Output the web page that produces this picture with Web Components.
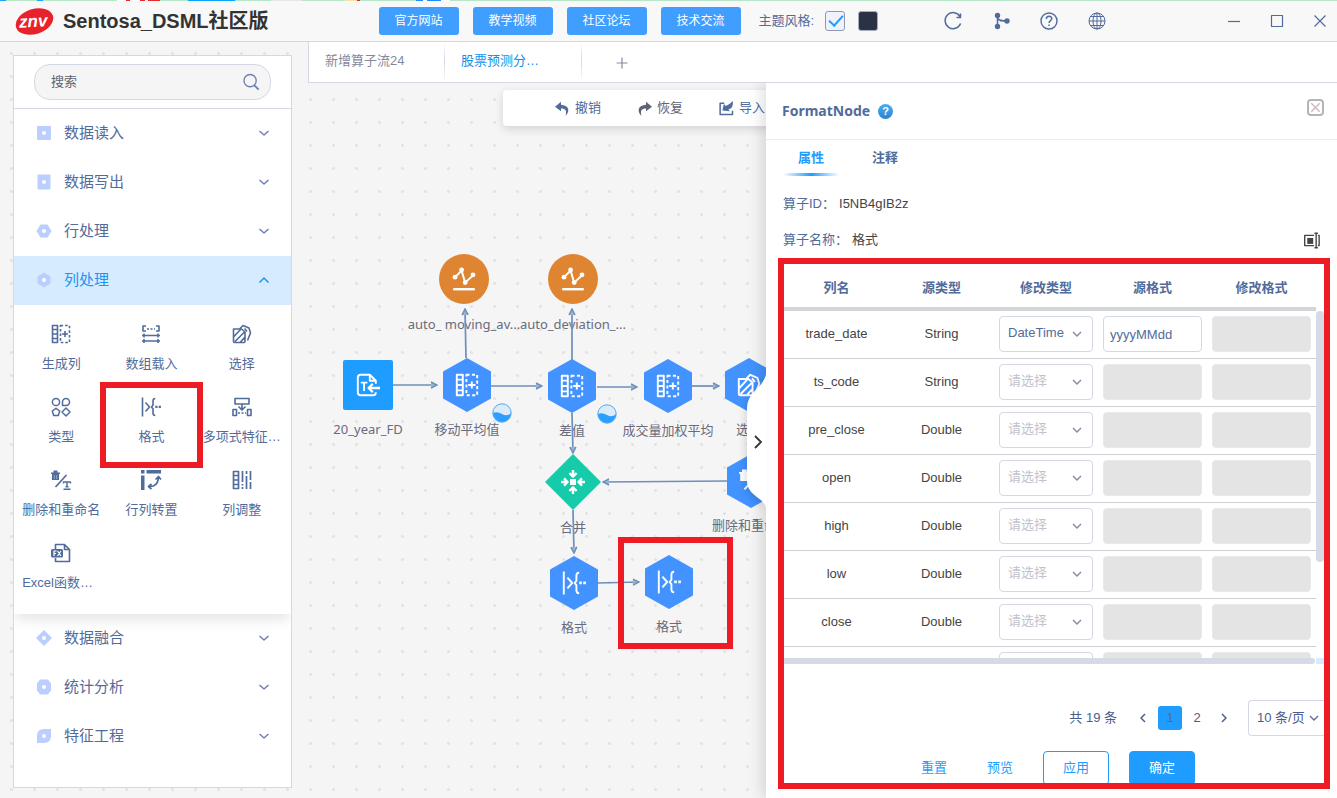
<!DOCTYPE html>
<html lang="zh-CN">
<head>
<meta charset="utf-8">
<meta name="viewport" content="width=device-width, initial-scale=1">
<title>Sentosa_DSML社区版</title>
<style>
  :root {
    --ink: #516b9b; --dark: #444; --muted: #85899c; --line: #d4d8e4; --blue: #1f9cff; --active: #1a96f5;
    --ui: "Liberation Sans", "Noto Sans CJK SC", sans-serif;
    --label: "Noto Sans", "Noto Sans CJK SC", sans-serif;
  }
  html, body { height: 100%; margin: 0; }
  body { font: 13px/18px var(--ui); color: var(--ink); background: #f5f5f5; overflow: hidden; }
</style>
</head>
<body>
<studio-app></studio-app>

<script>
const stroke = (w, d) => `<g fill="none" stroke="currentColor" stroke-width="${w}" stroke-linejoin="round">${d}</g>`;
const ICONS = {
  search: stroke(1.5, '<circle cx="9" cy="8.500" r="6.800"/><path d="M13.500 13.500l5 5" stroke-width="2"/>'),
  down: stroke(1.5, '<path d="M5.500 8l4.500 4 4.500-4"/>'),
  up: stroke(1.5, '<path d="M5.500 12.500l4.500-4.500 4.500 4.500"/>'),
  left: stroke(1.5, '<path d="M12 6l-4 4 4 4"/>'),
  right: stroke(1.5, '<path d="M8 6l4 4-4 4"/>'),
  plus: stroke(1.3, '<path d="M10 4v12M4 10h12"/>'),
  reload: stroke(1.5, '<path d="M17.600 12.500A8 8 0 1 1 17 5.500M17.500 2.500v4h-4"/>'),
  share: '<g fill="currentColor"><circle cx="6.500" cy="4.500" r="2.700"/><circle cx="6.500" cy="15.500" r="2.700"/><circle cx="16" cy="10" r="2.700"/></g>' + stroke(1.6, '<path d="M6.500 4.500v11M6.500 7c1 3 5 3 9.500 3"/>'),
  help: stroke(1.4, '<circle cx="10" cy="10" r="8"/><path d="M7.300 8c0-3.700 5.500-3.500 5.500-.4 0 2-2.800 2-2.800 4.300M10 13.500v1.600"/>'),
  globe: stroke(1, '<circle cx="10" cy="10" r="8"/><ellipse cx="10" cy="10" rx="4" ry="8"/><path d="M10 2v16M2 10h16M3.500 5.500h13M3.500 14.500h13"/>'),
  min: stroke(1.2, '<path d="M4 10.500h12"/>'),
  max: stroke(1.2, '<path d="M4.500 4.500h11v11h-11z"/>'),
  close: stroke(1.2, '<path d="M4.500 4.500l11 11M15.500 4.500l-11 11"/>'),
  cross: stroke(2.2, '<path d="M3.500 3.500l13 13M16.500 3.500l-13 13"/>'),
  undo: '<path fill="currentColor" d="M8 1L0 7.500 8 13.500V10c6 0 8 3 6 10C21 13 18 5.500 8 5z"/>',
  redo: '<path fill="currentColor" d="M12 1l8 6.500-8 6V10c-6 0-8 3-6 10C-1 13 2 5.500 12 5z"/>',
  import: stroke(2, '<path d="M7 3H1.500v15H18v-5"/>') + '<path fill="currentColor" d="M4.500 12.500l2-8.500 2.500 2.500Q14 5 18.500 0q1 10-6 11l2 2.500z"/>',
  rename: stroke(1.6, '<path d="M13 4H2v12h11M13.500 1.500h4M13.500 18.500h4M15.500 1.500v17M17.500 4H19v12h-1.500"/>') + '<path fill="currentColor" d="M5 7h7v7H5z"/>',
  gencol: stroke(1.6, '<path d="M1.500 1.500h5v17h-5zM1.500 5.500h5M1.500 10h5M1.500 14.500h5M14 7v6M11 10h6"/><path stroke-dasharray="2.600 2" d="M9.500 1.500h9v17h-9z"/>'),
  array: stroke(1.6, '<path d="M5 2H2v5h3M15 2h3v5h-3M1 11.500h18M1 17h18M3 9.500v4M17 9.500v4M3 15v4M17 15v4"/><path stroke-dasharray="2 1.500" d="M6 5h8"/>'),
  pick: stroke(1.6, '<path d="M1.500 5h8l3.500 3v9.500q0 1-1 1H2.500q-1 0-1-1zM2 12.500l6.500-7M3 17.500l9.500-9.500M8.500 18l4.500-5M8 4.500L11 1.500l6 2.500 1.500 5-3 7.500"/><path d="M12.500 4.500l2.500 3"/>'),
  types: stroke(1.5, '<circle cx="5" cy="5" r="3.600"/><path d="M11.500 8.500V5a3.500 3.500 0 1 1 3.500 3.500zM5 11.300l3.700 2.700-1.400 4.400H2.700L1.300 14zM15 11l4 4-4 4-4-4z"/>'),
  format: stroke(1.6, '<path d="M1.500 .5v19M4.500 5.500L8.500 10l-4 4.500M14.300 1.500Q12 1.500 12 4v4.200L10.500 10l1.500 1.800V16q0 2.500 2.300 2.500"/>') + '<path fill="currentColor" d="M14.300 8.800h2.200V11h-2.200zM17.700 8.800h2.200V11h-2.200z"/>',
  poly: stroke(1.6, '<path d="M3 1.500h14V7H3zM10 7v6M6.500 9.500L10 13l3.500-3.500M1 12.500h3.500v6H1zM15.500 12.500H19v6h-3.500z"/><path stroke-dasharray="2 1.500" d="M6 16h8"/>'),
  remove: '<path fill="currentColor" d="M0 2.500h2.500V.5h4v2H9V4H8v6H1V4H0z"/><path stroke="#fff" stroke-opacity=".5" stroke-width=".8" d="M3.300 5v4M5.700 5v4"/>' + stroke(1.7, '<path d="M4.500 17L15.500 5"/><path d="M12.500 13.500v-1.500h7v1.500M16 12v5M14.500 16.700h3M12.500 19.300h7" stroke-width="1.400"/>'),
  transpose: '<path fill="currentColor" d="M0 0h3.500v3.500H0zM5.500 0H20v3.500H5.500zM0 5.500h3.500V20H0z"/>' + stroke(1.7, '<path d="M8 16.500q9 .5 9.500-9.500M14.500 9.500l3-3 2.500 3M10.500 14l-3 2.500 3 2.500"/>'),
  adjust: stroke(1.7, '<path d="M1.500 1.500h5v17h-5zM1.500 5.500h5M1.500 10h5M1.500 14.500h5M10.500 1v11M10.500 14v1.500M10.500 17v2M14.500 1v3M14.500 6v13M18.500 1v9M18.500 12v7"/>'),
  excel: stroke(1.6, '<path d="M4.500 6V1.500h9l5 5V18.500h-14V15M13.500 1.500v5h5"/>') + '<rect x="0" y="6" width="12" height="8.500" rx="1.500" fill="currentColor"/><path stroke="#fff" stroke-width="1.200" fill="none" d="M3 13V8h2.500M3 10.500h2M6.500 8l3.500 5M10 8l-3.500 5"/>',
  chart: stroke(2, '<path d="M1 18.500h18"/><path d="M2.500 8.500L8 3l3 10L18 6.500" stroke-width="1.600"/>') + '<g fill="currentColor"><circle cx="2.500" cy="8.500" r="2"/><circle cx="8" cy="2.500" r="2"/><circle cx="11" cy="13" r="2"/><circle cx="17.500" cy="6.500" r="2"/></g>',
  file: stroke(1.6, '<path d="M16.500 9V6.500l-5-5H4Q1.500 1.500 1.500 4v12q0 2.500 2.500 2.500h10.500q2 0 2-2.500M11.500 1.500v5h5M4 8h5.500M6.700 8v7"/>') + stroke(1.9, '<path d="M20 12.500h-9M14 9l-3.500 3.500L14 16"/>'),
  merge: '<path fill="currentColor" d="M7.500 7.500h5v5h-5z"/>' + stroke(2, '<path d="M10 0v5M7 2.500l3 3 3-3M10 20v-5M7 17.500l3-3 3 3M0 10h5M2.500 7l3 3-3 3M20 10h-5M17.500 7l-3 3 3 3"/>'),
  sq: '<rect x="3" y="3" width="14" height="14" rx="1"/>', sheet: '<rect x="3.500" y="2.500" width="13" height="15" rx="1"/>',
  hexh: '<path d="M6.500 3.500h7l4 6.500-4 6.500h-7L2.500 10z"/>', hexv: '<path d="M10 2.500l6.500 4v7l-6.500 4-6.500-4v-7z"/>',
  dia: '<path d="M10 2l8 8-8 8-8-8z"/>', oct: '<path d="M6 2.500h8l3 4v7l-3 4H6l-3-4v-7z"/>',
  leaf: '<path d="M10 3h7v7q0 7-7 7H3v-7q0-7 7-7z"/>'
};

const define = (name, render) => customElements.define(name, class extends HTMLElement {
  constructor() { super(); this.attachShadow({ mode: 'open' }); }
  connectedCallback() {
    if (this.shadowRoot.childNodes.length) return;
    const t = document.createElement('template');
    t.innerHTML = `<style>*{box-sizing:border-box} button,input,select{font:inherit;color:inherit} button{border:0;background:none;padding:0}</style>` + render(this);
    this.shadowRoot.append(t.content.cloneNode(true));
  }
});

define('ds-icon', el => {
  const n = el.getAttribute('name');
  const marker = ['sq','sheet','hexh','hexv','dia','oct','leaf'].includes(n);
  return `<style>:host{display:block;flex:none;width:20px;height:20px}svg{display:block;width:100%;height:100%;overflow:visible;fill:currentColor}</style>
  <svg viewBox="0 0 20 20" aria-hidden="true">${ICONS[n]}${marker ? '<circle cx="10" cy="10" r="2" fill="#fff"/>' : ''}</svg>`;
});

define('mark-frame', () => `<style>:host{display:block;position:absolute;box-sizing:border-box;border:6px solid #ed1c24;pointer-events:none;z-index:2}</style>`);

/* ---------- header ---------- */
define('app-header', () => `<style>
  :host{display:block;background:#f8f8f8;border-bottom:1px solid var(--line)}
  .strip{height:1px;background:linear-gradient(90deg,#1aa0ff 6px,#b5e6c8 6px 37px,#1aa0ff 37px 43px,#b5e6c8 43px 117px,#fff 117px 126px,#e8262c 126px 130px,#fff 130px 140px,#e8262c 140px 145px,#fff 145px 148px,#e8262c 148px 160px,#b5e6c8 160px 188px,#0aa5ff 188px 235px,#b5e6c8 235px 271px,#e6e6ea 271px 302px,#b5e6c8 302px 345px,#ffe2a0 345px 357px,#e8262c 357px 360px,#b5e6c8 360px 416px,#1a8cff 416px 423px,#fff 423px 427px,#1a8cff 427px 441px,#fff 441px 450px,#b5e6c8 450px)}
  header{display:flex;align-items:center;height:40px;padding:0 7px 0 15px}
  .logo{width:39px;height:31px;flex:none}
  h1{margin:0 110px 0 9px;font-size:20px;line-height:28px;color:#333;font-weight:700;white-space:nowrap}
  nav{display:flex;gap:14px}
  nav button{width:80px;height:28px;border-radius:3px;background:#409eff;color:#fff;font-size:12px}
  fieldset{display:flex;align-items:center;border:0;margin:0 0 0 18px;padding:0;white-space:nowrap}
  input{appearance:none;width:20px;height:20px;margin:0 0 0 11px;border-radius:3px;border:1px solid #8d98b8;background:#eef3fb}
  input:checked::before{content:"";display:block;width:6px;height:12px;margin:0 0 0 6px;border:solid #1f9cff;border-width:0 2px 2px 0;transform:rotate(42deg)}
  input.dark{background:#2a3244;margin-left:13px;border-color:#a5abc0}
  .tools{display:flex;gap:28px;margin-left:65px}
  .win{display:flex;gap:23px;margin-left:auto}
  .tools button{width:20px}
</style>
<div class="strip"></div>
<header>
  <svg class="logo" viewBox="0 0 39 31"><ellipse cx="19.500" cy="15.500" rx="19.300" ry="12.500" transform="rotate(-18 19.500 15.500)" fill="#e8222a"/><text x="4" y="21" font-family="Liberation Sans" font-weight="700" font-style="italic" font-size="17" fill="#fff" transform="rotate(-3 19 15)">znv</text></svg>
  <h1>Sentosa_DSML社区版</h1>
  <nav><button>官方网站</button><button>教学视频</button><button>社区论坛</button><button>技术交流</button></nav>
  <fieldset><span>主题风格:</span><input type="radio" name="theme" checked aria-label="浅色"><input class="dark" type="radio" name="theme" aria-label="深色"></fieldset>
  <div class="tools">${['reload','share','help','globe'].map(i => `<button aria-label="${i}"><ds-icon name="${i}"></ds-icon></button>`).join('')}</div>
  <div class="win">${['min','max','close'].map(i => `<button aria-label="${i}"><ds-icon name="${i}"></ds-icon></button>`).join('')}</div>
</header>`);

/* ---------- operator palette ---------- */
define('palette-group', el => `<style>
  :host{display:block}
  .head{display:flex;align-items:center;width:100%;height:49px;padding:0 17px 2px 20px;font-size:15px;text-align:left}
  .mark{color:#bccdff;margin-right:10px}
  .arrow{margin-left:auto;color:#6f7fb5}
  :host([open]) .head{background:#d7ebff;color:var(--active)}
  :host([open]) .arrow{color:var(--active)}
  .body{display:none;grid-template-columns:repeat(3,1fr);padding:14px 4px 3px 2px;background:#fff;box-shadow:0 8px 12px -2px rgba(0,0,0,.1);clip-path:inset(0 0 -24px 0);position:relative}
  :host([open]) .body{display:grid}
</style>
<button class="head" aria-expanded="${el.hasAttribute('open')}"><ds-icon class="mark" name="${el.getAttribute('mark')}"></ds-icon><span>${el.getAttribute('label')}</span><ds-icon class="arrow" name="${el.hasAttribute('open') ? 'up' : 'down'}"></ds-icon></button>
<div class="body"><slot></slot></div>`);

define('palette-tile', el => `<style>
  :host{display:block;position:relative;height:73px;min-width:0}
  button{display:flex;flex-direction:column;align-items:center;width:100%;padding-top:5px}
  span{display:block;width:78px;margin-top:11px;white-space:nowrap}
  :host([cut]) span{text-align:left}
  mark-frame{top:-10px;bottom:-3px;left:-6px;right:-6px}
</style>
<button><ds-icon name="${el.getAttribute('icon')}"></ds-icon><span><slot></slot></span></button>${el.hasAttribute('marked') ? '<mark-frame></mark-frame>' : ''}`);

define('operator-palette', () => `<style>
  :host{display:flex;flex-direction:column;background:#fff;border:1px solid var(--line)}
  .search{padding:8px 20px;border-bottom:1px solid var(--line)}
  label{display:flex;align-items:center;height:36px;padding:0 10px 0 16px;border:1px solid var(--line);border-radius:16px;background:#f5f5f5}
  input{flex:1;min-width:0;border:0;padding:0;background:none;outline:0}
  input::placeholder{color:#5d6475;opacity:1}
  ds-icon{color:#6c80b5;width:18px;height:18px}
</style>
<div class="search"><label><input type="text" placeholder="搜索" aria-label="搜索"><ds-icon name="search"></ds-icon></label></div>
<palette-group mark="sq" label="数据读入"></palette-group>
<palette-group mark="sheet" label="数据写出"></palette-group>
<palette-group mark="hexh" label="行处理"></palette-group>
<palette-group mark="hexv" label="列处理" open>
  <palette-tile icon="gencol">生成列</palette-tile><palette-tile icon="array">数组载入</palette-tile><palette-tile icon="pick">选择</palette-tile>
  <palette-tile icon="types">类型</palette-tile><palette-tile icon="format" marked>格式</palette-tile><palette-tile icon="poly">多项式特征…</palette-tile>
  <palette-tile icon="remove">删除和重命名</palette-tile><palette-tile icon="transpose">行列转置</palette-tile><palette-tile icon="adjust">列调整</palette-tile>
  <palette-tile icon="excel" cut>Excel函数…</palette-tile>
</palette-group>
<palette-group mark="dia" label="数据融合"></palette-group>
<palette-group mark="oct" label="统计分析"></palette-group>
<palette-group mark="leaf" label="特征工程"></palette-group>`);

/* ---------- flow tabs ---------- */
define('flow-tabs', () => `<style>
  :host{display:flex;height:41px;background:#fff;border-left:1px solid var(--line);border-bottom:1px solid var(--line)}
  button{width:136px;padding:0 0 2px 16px;text-align:left;color:var(--muted);white-space:nowrap;border-right:1px solid;border-image:linear-gradient(#fff,var(--line),#fff) 1}
  button+button{width:137px}
  .on{color:#0f90ee}
  button.add{display:flex;align-items:center;justify-content:center;width:80px;border:0;padding:0}
  .add ds-icon{width:18px;height:18px;margin-top:1px}
</style>
<button>新增算子流24</button><button class="on">股票预测分…</button><button class="add" aria-label="新建"><ds-icon name="plus"></ds-icon></button>`);

/* ---------- canvas ---------- */
/* shape: fill, width, height, outline, gap to the caption */
const SHAPES = {
  hex: ['#4292ff', 48, 54, '<path d="M24 0l24 13.500v27L24 54 0 40.500v-27z"/>', 8],
  circle: ['#df8431', 50, 50, '<circle cx="25" cy="25" r="25"/>', 11],
  square: ['#1f9cff', 50, 50, '<rect width="50" height="50" rx="2"/>', 10],
  diamond: ['#15cba9', 56, 56, '<path d="M28 0l28 28-28 28L0 28z"/>', 8]
};
define('flow-node', el => {
  const [c, w, h, s, gap] = SHAPES[el.getAttribute('shape')];
  return `<style>
  :host{display:flex;flex-direction:column;align-items:center;position:absolute;left:${el.getAttribute('x') - 70}px;top:${el.getAttribute('y') - h / 2}px;width:140px;color:#6a6b7c;font-family:var(--label)}
  .shape{display:grid;place-items:center;position:relative;width:${w}px;height:${h}px;color:#fff}
  .shape>*{grid-area:1/1}
  .bg{fill:${c};display:block}
  ds-icon{width:24px;height:24px}
  .badge{position:absolute;left:49px;top:45px}
  span{white-space:nowrap;margin-top:${gap}px}
</style>
<div class="shape"><svg class="bg" width="${w}" height="${h}">${s}</svg><ds-icon name="${el.getAttribute('icon')}"></ds-icon>${el.hasAttribute('busy') ? '<svg class="badge" width="20" height="20"><circle cx="10" cy="10" r="9.200" fill="#dcebf8" stroke="#4aa8f5"/><path d="M1 10q4-2 9 1t9-1a9 9 0 0 1-18 0z" fill="#2b9fff"/></svg>' : ''}</div><span><slot></slot></span>`;
});

define('flow-canvas', () => {
  const edges = [[85,302,129,302],[158,275,157,226],[183,303,234,303],[264,277,264,226],[289,304,329,304],[384,303,411,303],[264,330,265,370],[419,398,295,399],[265,427,266,470],[290,500,331,499]];
  return `<style>
  :host{display:block;position:relative;overflow:hidden;min-width:0}
  .bar{position:absolute;left:195px;top:7px;width:520px;height:36px;display:flex;align-items:center;gap:36px;padding-left:52px;background:#fff;border-radius:4px;box-shadow:0 3px 10px rgba(0,0,0,.14)}
  .bar button{display:flex;align-items:center;gap:5px;white-space:nowrap}
  .bar ds-icon{width:15px;height:15px}
  .grey{color:#5f6474}
  .edges{position:absolute;left:0;top:0;width:100%;height:100%;overflow:visible}
  mark-frame{left:310px;top:454px;width:115px;height:112px}
</style>
<div class="bar"><button><ds-icon name="undo"></ds-icon>撤销</button><button class="grey"><ds-icon name="redo"></ds-icon>恢复</button><button><ds-icon name="import"></ds-icon>导入</button></div>
<flow-node shape="circle" icon="chart" x="156" y="196">auto_ moving_av...</flow-node>
<flow-node shape="circle" icon="chart" x="265" y="196">auto_deviation_...</flow-node>
<flow-node shape="square" icon="file" x="60" y="302">20_year_FD</flow-node>
<flow-node shape="hex" icon="gencol" x="159" y="302" busy>移动平均值</flow-node>
<flow-node shape="hex" icon="gencol" x="264" y="303" busy>差值</flow-node>
<flow-node shape="hex" icon="gencol" x="360" y="303">成交量加权平均</flow-node>
<flow-node shape="hex" icon="pick" x="441" y="302">选择</flow-node>
<flow-node shape="diamond" icon="merge" x="265" y="399">合并</flow-node>
<flow-node shape="hex" icon="remove" x="443" y="398">删除和重命名</flow-node>
<flow-node shape="hex" icon="format" x="266" y="500">格式</flow-node>
<flow-node shape="hex" icon="format" x="361" y="499">格式</flow-node>
<svg class="edges" aria-hidden="true"><defs><marker id="tip" viewBox="0 0 8 8" refX="7" refY="4" markerWidth="8" markerHeight="8" markerUnits="userSpaceOnUse" orient="auto"><path d="M1 1l6 3-6 3" fill="#9db3d0" stroke="#6d8fba" stroke-width="1.500"/></marker></defs>
<g stroke="#6d8fba" stroke-width="1.700">${edges.map(e => `<path marker-end="url(#tip)" d="M${e[0]} ${e[1]}L${e[2]} ${e[3]}"/>`).join('')}</g></svg>
<mark-frame></mark-frame>`;
});

/* ---------- property drawer ---------- */
const CHEVRON = c => `url("data:image/svg+xml,%3Csvg xmlns='http://www.w3.org/2000/svg' width='10' height='10'%3E%3Cpath d='M1 3l4 4 4-4' fill='none' stroke='%23${c}' stroke-width='1.3'/%3E%3C/svg%3E")`;

define('format-table', () => {
  const rows = [['trade_date','String','DateTime','yyyyMMdd'],['ts_code','String'],['pre_close','Double'],['open','Double'],['high','Double'],['low','Double'],['close','Double'],['','']];
  return `<style>
  :host{display:flex;flex-direction:column;min-height:0;overflow:hidden;position:relative}
  .view{flex:1;min-height:0;overflow:hidden;display:flex}
  table{flex:1;min-width:0;border-collapse:separate;border-spacing:0;table-layout:fixed;align-self:flex-start}
  th{height:47px;padding:4px 0 0;border-bottom:4px solid #d3d5db;font-weight:700;color:var(--ink)}
  td{height:48px;padding:0 5px 2px;border-bottom:1px solid #cfd1d6;text-align:center;color:var(--dark)}
  select,input{display:block;width:100%;height:36px;margin:0;border:1px solid var(--line);border-radius:4px;background:#fff;color:var(--ink);outline:0}
  select{appearance:none;padding:0 8px 2px;background:#fff ${CHEVRON('7f879c')} no-repeat right 10px center}
  select.empty{color:#bfc2cc}
  input{padding:2px 6px 0}
  input:disabled{background:#e4e4e4;border-color:#e9e9ec}
  .v{flex:none;width:8px;padding-top:47px}
  .v i{display:block;height:251px;background:#d6dae4;border-radius:4px}
  .h{display:flex;justify-content:space-between;height:6px}
  .h i{width:calc(100% - 9px);background:#d6dae4;border-radius:0 3px 3px 0}
  .h b{width:8px;background:#d7ebff}
</style>
<div class="view"><table><colgroup><col style="width:105px"><col style="width:105px"><col style="width:104px"><col><col></colgroup>
<thead><tr><th>列名</th><th>源类型</th><th>修改类型</th><th>源格式</th><th>修改格式</th></tr></thead>
<tbody>${rows.map(r => `<tr><td>${r[0]}</td><td>${r[1]}</td><td><select class="${r[2] ? '' : 'empty'}" aria-label="修改类型"><option>${r[2] || '请选择'}</option></select></td><td><input type="text" aria-label="源格式" ${r[3] ? `value="${r[3]}"` : 'disabled'}></td><td><input type="text" aria-label="修改格式" disabled></td></tr>`).join('')}</tbody></table>
<div class="v"><i></i></div></div>
<div class="h"><i></i><b></b></div>`;
});

define('page-nav', () => `<style>
  :host{display:flex;align-items:center;justify-content:flex-end;height:36px;color:#4b5d8a}
  button{width:24px;height:24px;border-radius:3px;display:grid;place-items:center}
  .total{margin-right:14px}
  .on{background:var(--blue);color:var(--ink);margin:0 3px}
  .next{margin:0 12px 0 3px}
  select{appearance:none;width:76px;height:36px;padding:0 0 0 8px;border:1px solid var(--line);border-right:0;border-radius:4px 0 0 4px;background:#fff ${CHEVRON('5a6a94')} no-repeat right 5px center}
</style>
<span class="total">共 19 条</span><button aria-label="上一页"><ds-icon name="left"></ds-icon></button><button class="on">1</button><button>2</button><button class="next" aria-label="下一页"><ds-icon name="right"></ds-icon></button>
<select aria-label="每页条数"><option>10 条/页</option></select>`);

define('property-drawer', () => `<style>
  :host{display:flex;flex-direction:column;position:relative;background:#fff;box-shadow:-4px 0 14px rgba(0,0,0,.13);clip-path:inset(0 0 0 -30px)}
  .handle{position:absolute;left:-19px;top:calc(50% - 73px);width:20px;height:144px}
  .handle svg{display:block;filter:drop-shadow(-3px 2px 3px rgba(0,0,0,.1))}
  header{display:flex;align-items:center;height:57px;padding:0 13px 0 16px;border-bottom:1px solid #ececee}
  h2{margin:0 8px 0 0;font:700 14px/20px var(--label);color:var(--ink)}
  .q{display:grid;place-items:center;width:15px;height:15px;border-radius:50%;background:linear-gradient(#4aaef0,#2c84cf);color:#fff;font-size:11px;font-weight:700;line-height:15px}
  .x{display:grid;place-items:center;width:17px;height:17px;margin:0 0 8px auto;border:2px solid #b5b5b5;border-radius:4px;color:#cdb9ba}
  .x ds-icon{width:13px;height:13px}
  .tabs{display:flex;gap:18px;padding:0 17px}
  .tabs button{width:56px;height:36px;font-weight:700}
  .tabs .on{color:var(--blue);background:linear-gradient(90deg,#1f9cff00,#1f9cff,#1f9cff00) center bottom/56px 3px no-repeat}
  dl{margin:0;padding:19px 17px 0}
  dl div{display:flex;align-items:center;height:18px;margin-bottom:18px}
  dt{white-space:nowrap;margin-right:4px} dd{margin:0;color:var(--dark)}
  dl ds-icon{margin-left:auto;width:17px;height:17px;color:var(--dark)}
  dl div:last-child{margin-bottom:9px}
  section{flex:1;min-height:0;display:flex;flex-direction:column;margin:0 7px 9px 12px;border:6px solid #ed1c24;overflow:hidden}
  format-table{flex:1}
  page-nav{margin-top:36px;flex:none}
  footer{display:flex;justify-content:center;gap:20px;margin:15px 0 -2px;padding-right:2px;flex:none}
  footer button{width:46px;height:34px;color:var(--blue)}
  footer .line,footer .fill{width:66px;border:1px solid var(--blue);border-radius:4px}
  footer .fill{background:var(--blue);color:#fff}
</style>
<button class="handle" aria-label="收起"><svg width="20" height="144"><path fill="#fff" d="M20 0C19 22 0 20 0 42V112C0 130 19 128 20 144z"/><path d="M8 68l6 6-6 6" fill="none" stroke="#333" stroke-width="1.800"/></svg></button>
<header><h2>FormatNode</h2><span class="q">?</span><button class="x" aria-label="关闭"><ds-icon name="cross"></ds-icon></button></header>
<div class="tabs"><button class="on">属性</button><button>注释</button></div>
<dl><div><dt>算子ID：</dt><dd>I5NB4gIB2z</dd></div><div><dt>算子名称：</dt><dd>格式</dd><ds-icon name="rename"></ds-icon></div></dl>
<section><format-table></format-table><page-nav></page-nav><footer><button>重置</button><button>预览</button><button class="line">应用</button><button class="fill">确定</button></footer></section>`);

define('studio-app', () => `<style>
  :host{display:flex;flex-direction:column;height:100vh}
  main{flex:1;min-height:0;display:grid;grid-template-columns:308px 1fr;background:#f5f5f5 radial-gradient(circle,#e3e3e4 1px,#e3e3e400 2px) 0 0/23px 23px}
  operator-palette{margin:13px 16px 10px 13px}
  .work{display:flex;flex-direction:column;min-width:0;min-height:0}
  .stage{flex:1;min-height:0;display:flex}
  flow-canvas{flex:1}
  property-drawer{flex:0 0 571px}
</style>
<app-header></app-header>
<main><operator-palette></operator-palette><div class="work"><flow-tabs></flow-tabs><div class="stage"><flow-canvas></flow-canvas><property-drawer></property-drawer></div></div></main>`);
</script>
</body>
</html>
